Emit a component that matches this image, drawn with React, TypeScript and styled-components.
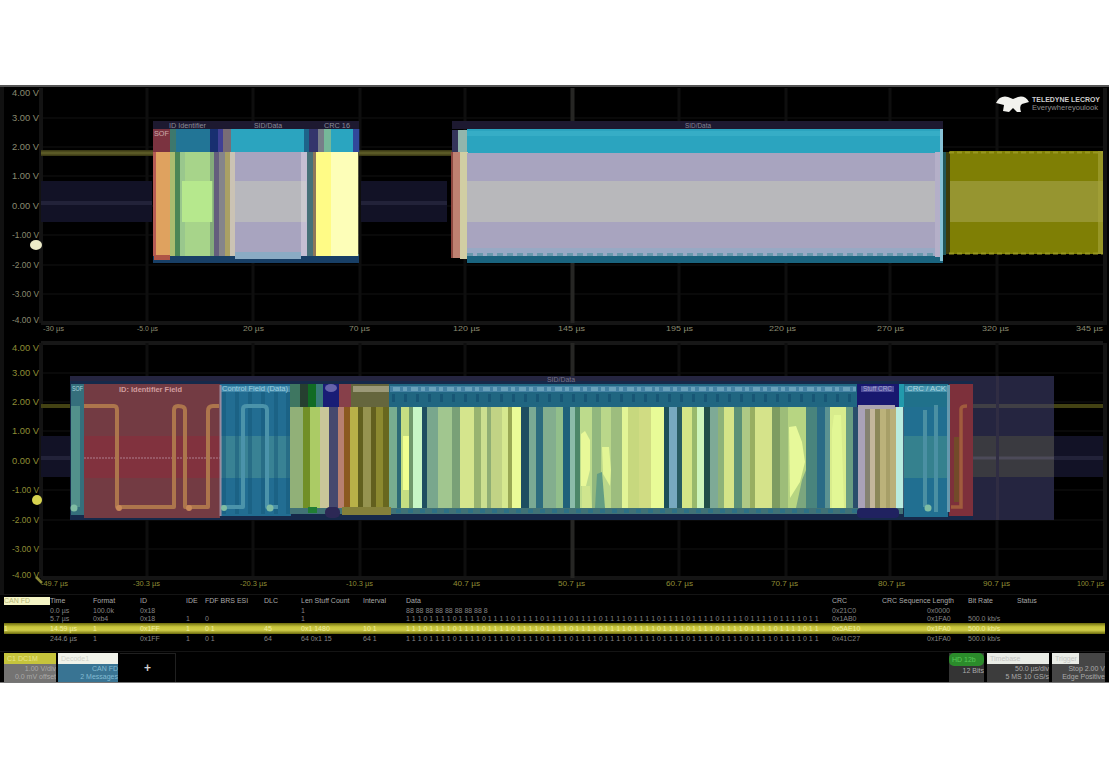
import React from 'react';
import styled, { createGlobalStyle } from 'styled-components';

const Global = createGlobalStyle`
  html, body { margin: 0; background: #fff; }
  body { font-family: "Liberation Sans", Arial, sans-serif; }
`;

const Page = styled.main`
  width: 1109px;
  height: 768px;
  padding-top: 85px;
  box-sizing: border-box;
  overflow: hidden;
  background: #fff;
`;

const Screen = styled.section`
  display: flex;
  flex-direction: column;
  width: 1109px;
  height: 598px;
  box-sizing: border-box;
  background: #000;
  border-top: 2px solid #555;
  border-bottom: 1px solid #777;
  overflow: hidden;
`;

const Plot = styled.svg`
  display: block;
  flex: none;
  font-family: "Liberation Sans", Arial, sans-serif;
`;

const Table = styled.div`
  flex: none;
  height: 57px;
  padding: 0 4px;
  box-sizing: border-box;
  border-top: 1px solid #141414;
`;

const Row = styled.div<{ $h: number; $selected?: boolean; $head?: boolean }>`
  display: grid;
  grid-template-columns: 46px 43px 47px 46px 19px 59px 37px 62px 43px 426px 50px 45px 41px 49px 80px;
  align-items: center;
  height: ${p => p.$h}px;
  font-size: 7px;
  line-height: 8px;
  white-space: nowrap;
  color: ${p => (p.$selected ? '#f0eea0' : p.$head ? '#a8a8a8' : '#858585')};
  background: ${p => (p.$selected ? 'linear-gradient(#6b6a0c, #c8c63c 35%, #cfcc48 65%, #6b6a0c)' : 'transparent')};
`;

const Cell = styled.span<{ $mark?: boolean; $span?: number }>`
  height: 8px;
  grid-column: span ${p => p.$span ?? 1};
  color: ${p => (p.$mark ? '#b4b478' : 'inherit')};
  background: ${p => (p.$mark ? '#f4f4c4' : 'transparent')};
`;

const Footer = styled.footer`
  flex: 1;
  display: flex;
  justify-content: space-between;
  padding: 1px 4px 0;
  border-top: 1px solid #141414;
  overflow: hidden;
`;

const Group = styled.div<{ $gap: number }>`
  display: flex;
  gap: ${p => p.$gap}px;
`;

const Descriptor = styled.div<{ $w: number; $bg: string; $fg: string }>`
  width: ${p => p.$w}px;
  height: 30px;
  background: ${p => p.$bg};
  color: ${p => p.$fg};
  font-size: 7px;
  line-height: 8px;
  text-align: right;
  white-space: nowrap;
  overflow: hidden;
`;

const DescriptorHead = styled.div<{ $bg: string; $fg: string; $h?: number; $r?: number; $w?: number }>`
  width: ${p => (p.$w ? `${p.$w}px` : '100%')};
  height: ${p => p.$h ?? 11}px;
  margin-bottom: 1px;
  border-radius: ${p => p.$r ?? 0}px;
  line-height: ${p => p.$h ?? 11}px;
  text-align: left;
  text-indent: 3px;
  background: ${p => p.$bg};
  color: ${p => p.$fg};
`;

const AddTrace = styled.div`
  width: 56px;
  height: 30px;
  border: 1px solid #202020;
  border-left: 0;
  box-sizing: border-box;
  color: #d0d0d0;
  font-size: 12px;
  font-weight: bold;
  line-height: 28px;
  text-align: center;
`;

const gridX = [147, 253, 360, 465, 679, 786, 890, 997];
const volts = ['4.00 V', '3.00 V', '2.00 V', '1.00 V', '0.00 V', '-1.00 V', '-2.00 V', '-3.00 V', '-4.00 V'];
const voltY = [93, 118, 147, 176, 206, 235, 265, 294, 320];

type Seg = [x0: number, x1: number, color: string];

function Graticule({ dy, color, ticks, ends }: { dy: number; color: string; ticks: string[]; ends: number[] }) {
  return (
    <g>
      {voltY.slice(1, 8).map(y => <path key={y} d={`M41 ${y + dy}H1103`} stroke="#090909" strokeWidth="2" />)}
      {gridX.map(x => <path key={x} d={`M${x} ${88 + dy}V${323 + dy}`} stroke="#0e0e0e" strokeWidth="3" />)}
      <path d={`M41 ${88 + dy}V${323 + dy}M1105 ${88 + dy}V${325 + dy}`} stroke="#131313" strokeWidth="4" />
      <path d={`M41 ${323 + dy}H1103M41 ${343 + dy}H1103`} stroke="#151515" strokeWidth="4" />
      <path d={`M572.5 ${88 + dy}V${323 + dy}`} stroke="#262624" strokeWidth="4" />
      {volts.map((v, i) => (
        <text key={v} x="12" y={voltY[i] + dy + 3} fontSize="8.5" fill={color} textLength="27" lengthAdjust="spacingAndGlyphs">{v}</text>
      ))}
      {ticks.map((t, i) => (
        <text key={i} x={ends[i]} y={331 + dy} fontSize="8" fill={color} textLength={dy === 0 && i < 4 ? 21 : 27} lengthAdjust="spacingAndGlyphs">{t}</text>
      ))}
    </g>
  );
}

function Idle({ x0, x1, dy }: { x0: number; x1: number; dy: number }) {
  return (
    <g>
      <rect x={x0} y={181 + dy} width={x1 - x0} height="41" fill="#121226" />
      <rect x={x0} y={201 + dy} width={x1 - x0} height="4" fill="#222239" />
    </g>
  );
}

function Stripes({ segs, y, h }: { segs: Seg[]; y: number; h: number }) {
  return (
    <g>
      {segs.map(([a, b, c]) => <rect key={a} x={a} y={y} width={b - a + 0.3} height={h} fill={c} />)}
    </g>
  );
}

const topHeads: Seg[] = [
  [153, 170, '#7b3340'], [170, 176, '#3d786c'], [176, 210, '#227596'], [210, 218, '#182f70'],
  [218, 223, '#404094'], [223, 231, '#786d76'], [231, 304, '#2ba4bf'], [304, 309, '#1d648a'],
  [309, 318, '#34356c'], [318, 324, '#777d88'], [324, 331, '#76b799'], [331, 353, '#2aa5c0'], [353, 359, '#31479a'],
];
const topOuter: Seg[] = [
  [153, 156, '#b65b54'], [156, 170, '#dfa25f'], [170, 175, '#a9bd70'], [175, 180, '#4a8656'],
  [180, 185, '#99c78d'], [185, 210, '#a7d48a'], [210, 214, '#84ab7b'], [214, 219, '#645d7d'],
  [219, 225, '#85858a'], [225, 230, '#aaa164'], [230, 235, '#cbc3b4'], [235, 301, '#a8a4bf'],
  [301, 307, '#c5bed3'], [307, 313, '#477078'], [313, 316, '#8f765a'], [316, 331, '#fffb86'], [331, 358, '#fdfeb8'],
];
const topMid: Seg[] = [[182, 212, '#b6e88d'], [235, 301, '#b8b8bd'], [301, 306, '#cbc9ce']];

const lowerBody: Seg[] = [
  [290, 303, '#91b078'], [303, 310, '#718f27'], [310, 320, '#abcb65'], [320, 329, '#c8c699'],
  [329, 338, '#46496e'], [338, 344, '#b77f70'], [344, 350, '#8b5920'], [350, 358, '#b9b148'],
  [358, 363, '#61601f'], [363, 371, '#959350'], [371, 376, '#625f1e'], [376, 383, '#8c8930'],
  [383, 389, '#68671f'], [389, 397, '#78ad90'], [397, 401, '#2d6a76'], [401, 409, '#c5de82'],
  [409, 413, '#70996c'], [413, 422, '#c8f7c6'], [422, 427, '#1e4f60'], [427, 438, '#79a78d'],
  [438, 452, '#a1c68f'], [452, 460, '#79a077'], [460, 474, '#d5e58d'], [474, 481, '#98b370'],
  [481, 487, '#cbdf90'], [487, 491, '#8fae75'], [491, 502, '#c1d385'], [502, 508, '#d6e88f'],
  [508, 512, '#99a854'], [512, 521, '#eafb97'], [521, 529, '#1d4e61'], [529, 536, '#7aaa94'],
  [536, 543, '#2d6c7e'], [543, 556, '#83ae8e'], [556, 563, '#92bf8b'], [563, 570, '#20617a'],
  [570, 575, '#8bbcaa'], [575, 580, '#4c8769'], [580, 592, '#bddb8c'], [592, 601, '#91b77e'],
  [601, 611, '#bad78a'], [611, 622, '#9dbd7e'], [622, 628, '#e2f596'], [628, 639, '#c7d87e'],
  [639, 651, '#d0dc83'], [651, 664, '#e8fb97'], [664, 669, '#1c5058'], [669, 677, '#77a9bf'],
  [677, 682, '#285b61'], [682, 692, '#d4e587'], [692, 697, '#99b96c'], [697, 704, '#cdf5bb'],
  [704, 710, '#214f48'], [710, 718, '#7eaa96'], [718, 724, '#8eb279'], [724, 734, '#d5e488'],
  [734, 742, '#5b9177'], [742, 750, '#aec985'], [750, 755, '#98ae61'], [755, 772, '#d5e38a'],
  [772, 780, '#7e9c61'], [780, 788, '#9dbd79'], [788, 806, '#b7d582'], [806, 817, '#49847d'],
  [817, 825, '#2a6b86'], [825, 830, '#5b9292'], [830, 846, '#d8ec8d'], [846, 853, '#6a9d83'],
  [853, 858, '#294d6c'], [858, 865, '#aaa2b8'], [865, 870, '#858271'], [870, 875, '#c4b69b'],
  [875, 880, '#8c8758'], [880, 886, '#bbb27a'], [886, 890, '#a79f68'], [890, 896, '#b9b07a'], [896, 903, '#b9ece0'],
];

const lowerHeads: Seg[] = [
  [290, 300, '#3e7661'], [300, 308, '#263f30'], [308, 316, '#116b24'], [316, 323, '#397b78'],
  [323, 339, '#191d76'], [339, 351, '#87404a'], [351, 389, '#65663d'], [389, 857, '#206681'],
  [857, 899, '#18186f'], [899, 904, '#229aac'], [904, 948, '#20718b'],
];

function Logo() {
  return (
    <g fill="#f2f2ee">
      <path d="M996 103Q1000 95 1008 97L1013 99L1018 97Q1025 95 1029 102L1022 104Q1019 106 1021 112L1017 112L1013 108L1009 112L1003 111L1004 105Z" />
      <text x="1032" y="102" fontSize="7.5" fontWeight="bold" fill="#cfcfcf" textLength="68" lengthAdjust="spacingAndGlyphs">TELEDYNE LECROY</text>
      <text x="1032" y="110" fontSize="6.5" fill="#8c8c8c" textLength="66" lengthAdjust="spacingAndGlyphs">Everywhereyoulook</text>
    </g>
  );
}

function OverviewPlot() {
  return (
    <Plot width="1109" height="253" viewBox="0 87 1109 253">
      <rect x="0" y="87" width="4" height="253" fill="#111" />
      <Graticule dy={0} color="#8a8a70"
        ticks={['-30 µs', '-5.0 µs', '20 µs', '70 µs', '120 µs', '145 µs', '195 µs', '220 µs', '270 µs', '320 µs', '345 µs']}
        ends={[43, 137, 243, 349, 453, 558, 666, 769, 877, 982, 1076]} />
      <path d="M41 153H153M359 153H452" stroke="#3c3b15" strokeWidth="6" />
      <path d="M41 153H153M359 153H452" stroke="#5a5926" strokeWidth="3" />
      <Idle x0={41} x1={152} dy={0} />
      <Idle x0={361} x1={447} dy={0} />

      <rect x="153" y="121" width="206" height="9" fill="#1d1930" />
      <Stripes segs={topHeads} y={129} h={23} />
      <rect x="153" y="254" width="206" height="9" fill="#183f66" />
      <Stripes segs={topOuter} y={152} h={104} />
      <Stripes segs={topMid} y={181} h={41} />
      <rect x="235" y="252" width="66" height="7" fill="#8aabc4" />
      <rect x="154" y="255" width="16" height="5" fill="#af5546" />
      <g fontSize="7" fill="#8c8c98">
        <text x="169" y="128" textLength="37" lengthAdjust="spacingAndGlyphs">ID Identifier</text>
        <text x="254" y="128" textLength="28" lengthAdjust="spacingAndGlyphs">SID/Data</text>
        <text x="324" y="128" textLength="26" lengthAdjust="spacingAndGlyphs">CRC 16</text>
        <text x="154" y="136" textLength="15" fill="#caa" lengthAdjust="spacingAndGlyphs">SOF</text>
      </g>

      <rect x="452" y="121" width="491" height="8" fill="#1d1930" />
      <rect x="452" y="130" width="8" height="22" fill="#34345a" />
      <rect x="458" y="130" width="9" height="22" fill="#91b5ac" />
      <rect x="467" y="129" width="476" height="24" fill="#2ba4bf" />
      <rect x="467" y="131" width="476" height="5" fill="#36adc6" />
      <rect x="452" y="152" width="9" height="106" fill="#bf8171" />
      <rect x="451" y="152" width="2" height="106" fill="#8d473f" />
      <rect x="460" y="152" width="8" height="107" fill="#d1cea3" />
      <rect x="467" y="153" width="474" height="100" fill="#a8a4bf" />
      <rect x="467" y="181" width="474" height="41" fill="#b8b8bb" />
      <rect x="467" y="248" width="474" height="8" fill="#98a9c4" />
      <rect x="467" y="256" width="476" height="7" fill="#1a647f" />
      <path d="M467 254.5H941" stroke="#6799ad" strokeWidth="3" strokeDasharray="6 4" />
      <rect x="935" y="152" width="6" height="105" fill="#b4afc8" />
      <rect x="940" y="129" width="3" height="132" fill="#86c2d6" />
      <rect x="943" y="152" width="3" height="103" fill="#20575b" />
      <text x="685" y="128" fontSize="7" fill="#858596" textLength="26" lengthAdjust="spacingAndGlyphs">SID/Data</text>

      <rect x="946" y="152" width="4" height="102" fill="#3d3c0a" />
      <rect x="950" y="151" width="153" height="103" fill="#7f7f05" />
      <rect x="950" y="181" width="153" height="41" fill="#969530" />
      <path d="M949 152.5H1103M949 253.5H1103" stroke="#989720" strokeWidth="2" strokeDasharray="5 3" />
      <rect x="1098" y="151" width="5" height="103" fill="#a6a53b" opacity=".6" />
      <ellipse cx="36" cy="245" rx="6" ry="5" fill="#ecebc8" />
      <Logo />
    </Plot>
  );
}

function ZoomPlot() {
  const dy = 255;
  return (
    <Plot width="1109" height="254" viewBox="0 340 1109 254">
      <rect x="0" y="340" width="4" height="254" fill="#111" />
      <path d="M41 343H1103" stroke="#171717" strokeWidth="4" />
      <Graticule dy={dy} color="#8f8d35"
        ticks={['-49.7 µs', '-30.3 µs', '-20.3 µs', '-10.3 µs', '40.7 µs', '50.7 µs', '60.7 µs', '70.7 µs', '80.7 µs', '90.7 µs', '100.7 µs']}
        ends={[41, 133, 240, 346, 453, 558, 666, 771, 878, 983, 1077]} />
      <path d="M41 406H72M1054 406H1103" stroke="#434213" strokeWidth="4" />
      <Idle x0={41} x1={70} dy={dy} />
      <Idle x0={1054} x1={1103} dy={dy} />

      <rect x="70" y="376" width="984" height="144" fill="#252540" />
      <rect x="70" y="381" width="903" height="139" fill="#16294a" />
      <rect x="973" y="436" width="81" height="41" fill="#3a3a40" />
      <path d="M973 458H1054" stroke="#4c4a59" strokeWidth="3" />
      <path d="M973 406H1054" stroke="#403f45" strokeWidth="4" />
      <path d="M997.5 376V520" stroke="#302d43" strokeWidth="3" />
      <rect x="71" y="384" width="13" height="131" fill="#356f7c" />
      <rect x="71" y="406" width="9" height="101" fill="#52908b" />
      <rect x="84" y="384" width="136" height="134" fill="#733b43" />
      <rect x="84" y="436" width="136" height="42" fill="#81323e" />
      <path d="M84 458H220" stroke="#985866" strokeWidth="2" strokeDasharray="2 1" />
      <rect x="220" y="384" width="71" height="132" fill="#226d92" />
      <rect x="220" y="436" width="71" height="42" fill="#398294" />
      {[222, 235, 248, 261, 274, 286].map(x => <rect key={x} x={x} y="390" width="4" height="124" fill="#135476" opacity=".45" />)}
      <rect x="904" y="384" width="44" height="133" fill="#216f91" />
      <rect x="904" y="436" width="44" height="42" fill="#35818e" />
      <Stripes segs={lowerHeads} y={384} h={23} />
      <rect x="290" y="506" width="613" height="8" fill="#417276" />
      <Stripes segs={lowerBody} y={407} h={101} />

      <path d="M581 486V434L585 431L590 440V470L586 486Z" fill="#e8f898" />
      <path d="M582 486H590L592 508H582Z" fill="#cfe58e" />
      <path d="M602 447H609L611 470L610 486L603 474Z" fill="#e2f595" />
      <path d="M595 508L597 474L602 472L605 508Z" fill="#639d83" />
      <path d="M789 427L796 426L802 442L805 462L800 482L790 498Z" fill="#e7f99a" />
      <path d="M802 480L806 470V508H796Z" fill="#7ba67e" />
      <path d="M403 436H409V490H403Z" fill="#f0ff90" />
      <path d="M832 430L834 415H841L844 508H832Z" fill="#e2f795" />

      <rect x="325" y="507" width="15" height="11" rx="5" fill="#2c2855" />
      <rect x="857" y="508" width="42" height="10" rx="4" fill="#202260" />
      <rect x="858" y="405" width="37" height="4" fill="#aba4af" />
      <rect x="308" y="507" width="9" height="6" fill="#217e34" />
      <rect x="342" y="507" width="49" height="8" fill="#84803b" />
      <path d="M857 511H391" stroke="#237090" strokeWidth="4" strokeDasharray="5 7" opacity=".6" />
      <rect x="220" y="386" width="70" height="6" fill="#4289ab" />
      <rect x="390" y="386" width="466" height="6" fill="#4583a5" />
      <path d="M393 389H856" stroke="#6aa2bb" strokeWidth="4" strokeDasharray="7 3 4 4" />
      <path d="M392 398H856" stroke="#145071" strokeWidth="8" strokeDasharray="3 9" opacity=".7" />
      <rect x="353" y="386" width="36" height="6" fill="#9b9978" />
      <rect x="861" y="386" width="33" height="6" fill="#4f4d9c" />
      <rect x="905" y="386" width="43" height="6" fill="#4996b0" />
      <ellipse cx="331" cy="388" rx="6" ry="4" fill="#6664aa" />

      <g fill="none" strokeWidth="4" strokeLinejoin="round">
        <path d="M84 406H114Q117 406 117 410V507H174V410Q174 406 178 406Q185 406 185 410V507H208V411Q208 406 213 406H219" stroke="#ad754c" />
        <path d="M221 507H243V409Q243 406 247 406H263Q267 406 267 410V507H278" stroke="#4b93aa" />
        <path d="M925 410V507M936 405V512" stroke="#4b90a3" />
      </g>
      <path d="M220.5 385V516" stroke="#9b8b9f" strokeWidth="2" />
      <rect x="949" y="384" width="24" height="132" fill="#7d303b" />
      <path d="M951 507H961V409Q961 406 967 406" stroke="#a05b3d" strokeWidth="3.5" fill="none" />
      <rect x="954" y="437" width="5" height="65" fill="#724a29" />
      <path d="M948.5 385V512" stroke="#6599ae" strokeWidth="3" />
      <g fill="#80bda3">
        <circle cx="74" cy="508" r="3.5" /><circle cx="224" cy="508" r="3" /><circle cx="270" cy="508" r="3.5" /><circle cx="928" cy="508" r="3.5" />
      </g>
      <g fill="#c88959"><circle cx="119" cy="508" r="3" /><circle cx="189" cy="508" r="3" /></g>
      <g fontSize="7.5" fill="#d19d9f">
        <text x="119" y="391.5" fontWeight="bold" textLength="63" lengthAdjust="spacingAndGlyphs">ID: Identifier Field</text>
        <text x="72" y="391" fill="#a9d3dc" textLength="11" lengthAdjust="spacingAndGlyphs">SOF</text>
        <text x="222" y="391" fill="#9ed0e0" textLength="66" lengthAdjust="spacingAndGlyphs">Control Field (Data)</text>
        <text x="863" y="391" fill="#a9a8d0" textLength="29" lengthAdjust="spacingAndGlyphs">Stuff CRC</text>
        <text x="907" y="391" fill="#b0d6df" textLength="39" lengthAdjust="spacingAndGlyphs">CRC / ACK</text>
        <text x="547" y="382" fontSize="7" fill="#77758a" textLength="28" lengthAdjust="spacingAndGlyphs">SID/Data</text>
      </g>
      <circle cx="37" cy="500" r="5" fill="#d7d34f" />
      <path d="M36 577L42 583" stroke="#8a8836" strokeWidth="2.5" />
    </Plot>
  );
}

const bits = (n: number) => Array.from({ length: n }, (_, i) => (i % 5 === 3 ? '0' : '1')).join(' ');

const decodeRows = [
  { h: 8, cells: ['', '0.0 µs', '100.0k', '0x18', '', '', '', ' 1', '', '88 88 88 88 88 88 88 88 8', '0x21C0', '', '0x0000', '', ''] },
  { h: 8, cells: ['', '5.7 µs', '0xb4', '0x18', '1', '0', '', ' 1', '', bits(71), '0x1AB0', '', '0x1FA0', '500.0 kb/s', ''] },
  { h: 11, selected: true, cells: ['1', '14.59 µs', '  1', '0x1FF', '1', '0     1', '45', '0x1 1480', '10 1', bits(71), '0x5AE10', '', '0x1FA0', '500.0 kb/s', ''] },
  { h: 9, cells: ['', '244.6 µs', '  1', '0x1FF', '1', '0     1', '64', '64 0x1 15', '64 1', bits(71), '0x41C27', '', '0x1FA0', '500.0 kb/s', ''] },
];

const columns = ['CAN FD', 'Time', 'Format', 'ID', 'IDE', 'FDF BRS ESI', 'DLC', 'Len Stuff Count', 'Interval', 'Data', 'CRC', 'CRC Sequence Length', 'Bit Rate', 'Status'];

export default function App() {
  return (
    <Page>
      <Global />
      <Screen>
        <OverviewPlot />
        <ZoomPlot />
        <Table>
          <Row $h={12} $head>
            {columns.map((t, i) => <Cell key={t} $mark={i === 0} $span={i === 11 ? 2 : 1}>{t}</Cell>)}
          </Row>
          {decodeRows.map((row, r) => (
            <Row key={r} $h={row.h} $selected={row.selected}>
              {row.cells.map((t, i) => <Cell key={i}>{t}</Cell>)}
            </Row>
          ))}
        </Table>
        <Footer>
          <Group $gap={2}>
            <Descriptor $w={52} $bg="#747372" $fg="#aaa9a9">
              <DescriptorHead $bg="#c6c43c" $fg="#e6e488">C1 DC1M</DescriptorHead>
              1.00 V/div<br />0.0 mV offset
            </Descriptor>
            <Descriptor $w={60} $bg="#397493" $fg="#82bbd2">
              <DescriptorHead $bg="#f0f2e9" $fg="#d0d2c9">Decode1</DescriptorHead>
              CAN FD<br />2 Messages
            </Descriptor>
            <AddTrace>+</AddTrace>
          </Group>
          <Group $gap={3}>
            <Descriptor $w={35} $bg="#343434" $fg="#aaa">
              <DescriptorHead $bg="#2b8b2b" $fg="#58c958" $h={13} $r={5}>HD 12b</DescriptorHead>
              12 Bits
            </Descriptor>
            <Descriptor $w={62} $bg="#3c3c3c" $fg="#aaa">
              <DescriptorHead $bg="#e9ece6" $fg="#c4c5c2">Timebase</DescriptorHead>
              50.0 µs/div<br />5 MS 10 GS/s
            </Descriptor>
            <Descriptor $w={53} $bg="#464646" $fg="#aaa">
              <DescriptorHead $bg="#e9ece6" $fg="#c4c5c2" $w={27}>Trigger</DescriptorHead>
              Stop 2.00 V<br />Edge Positive
            </Descriptor>
          </Group>
        </Footer>
      </Screen>
    </Page>
  );
}
